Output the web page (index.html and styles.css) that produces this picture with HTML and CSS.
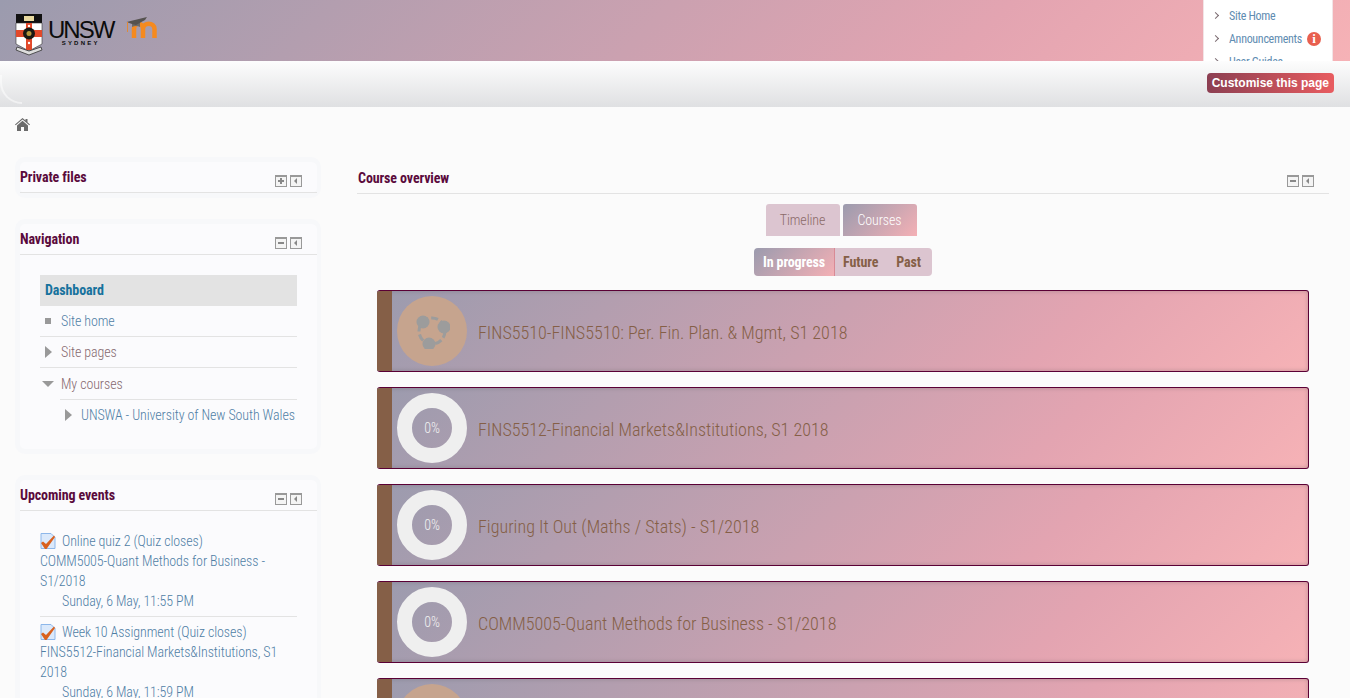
FILE: index.html
```html
<!DOCTYPE html>
<html lang="en">
<head>
    <meta charset="UTF-8">
    <title>Dashboard</title>
    <meta name="viewport" content="width=device-width, initial-scale=1.0">
    <link rel="stylesheet" href="styles.css">
</head>
<body>

<header class="topbar">
    <div class="brand">
        <svg class="crest" width="28" height="42" viewBox="0 0 28 42">
            <rect x="1" y="0" width="26" height="9" fill="#111"/>
            <rect x="9" y="2" width="10" height="5" fill="#e8d9a0"/>
            <path d="M1 9h26v21l-13 7-13-7z" fill="#fff" stroke="#333" stroke-width=".6"/>
            <rect x="11" y="9" width="6" height="27" fill="#e2492a"/>
            <rect x="1" y="16" width="26" height="7" fill="#e2492a"/>
            <circle cx="14" cy="19.500" r="6" fill="#1a1a14"/>
            <circle cx="14" cy="19.500" r="2.500" fill="#b5973d"/>
            <circle cx="14" cy="12" r="1.200" fill="#fff"/>
            <circle cx="14" cy="29" r="1.200" fill="#fff"/>
            <path d="M1 36l13 5 13-5-1-3-12 4-12-4z" fill="#ddd" stroke="#333" stroke-width=".8"/>
        </svg>
        <div class="wordmark">
            <span class="wordmark-main">UNSW</span>
            <span class="wordmark-sub">SYDNEY</span>
        </div>
        <svg class="moodle" width="32" height="24" viewBox="0 0 32 24">
            <path d="M8 23V14c0-7 9-7 9 0v9M17 14c0-7 11.500-7 11.500 0v9" fill="none" stroke="#f58a1f" stroke-width="4.500"/>
            <path d="M6 8v4c3-1.500 6-1 8 0V7z" fill="#6d6a67"/>
            <path d="M.500 7L21 2l-2 3-9 5-4-1z" fill="#55524f"/>
            <path d="M1.500 7v10" stroke="#e08a3a" stroke-width="1" fill="none"/>
        </svg>
    </div>
    <nav class="quick-menu">
        <a class="quick-link">Site Home</a>
        <a class="quick-link">Announcements <span class="info-badge">i</span></a>
        <a class="quick-link">User Guides</a>
    </nav>
</header>

<div class="band">
    <a class="customise">Customise this page</a>
</div>

<div class="crumbs">
    <svg width="15" height="13" viewBox="0 0 15 13"><path d="M7.500 0l3 2.600V1h2v3.300L15 6.500l-.7.800-6.800-5.800L.7 7.300 0 6.500zM2 7.500l5.500-4.700L13 7.500V13H9V9H6v4H2z" fill="#6b6b6b"/></svg>
</div>

<div class="page">
    <aside class="side">
        <section class="block">
            <div class="block-head">
                <h3>Private files</h3>
                <div class="block-tools">
                    <span class="tool tool-plus"></span>
                    <span class="tool tool-dock"></span>
                </div>
            </div>
        </section>

        <section class="block">
            <div class="block-head">
                <h3>Navigation</h3>
                <div class="block-tools">
                    <span class="tool tool-minus"></span>
                    <span class="tool tool-dock"></span>
                </div>
            </div>
            <ul class="nav-tree">
                <li class="nav-current">Dashboard</li>
                <li class="nav-link"><span class="mark mark-square"></span>Site home</li>
                <li class="nav-plain"><span class="mark mark-right"></span>Site pages</li>
                <li class="nav-plain nav-open"><span class="mark mark-down"></span>My courses</li>
                <li class="nav-link nav-child"><span class="mark mark-right"></span>UNSWA - University of New South Wales</li>
            </ul>
        </section>

        <section class="block">
            <div class="block-head">
                <h3>Upcoming events</h3>
                <div class="block-tools">
                    <span class="tool tool-minus"></span>
                    <span class="tool tool-dock"></span>
                </div>
            </div>
            <div class="events">
                <div class="event">
                    <div class="event-name">
                        <svg class="quiz-icon" width="16" height="16" viewBox="0 0 16 16"><path d="M1 .500h10l4 4v11H1z" fill="#dbe9fb" stroke="#8db7ea"/><path d="M1 10l2-1.500 3 2.500L14 2.500l1 1.500L6.500 16H5z" fill="#d9611f"/></svg>
                        Online quiz 2 (Quiz closes)
                    </div>
                    <div>COMM5005-Quant Methods for Business - S1/2018</div>
                    <div class="event-date">Sunday, 6 May, 11:55 PM</div>
                </div>
                <div class="event">
                    <div class="event-name">
                        <svg class="quiz-icon" width="16" height="16" viewBox="0 0 16 16"><path d="M1 .500h10l4 4v11H1z" fill="#dbe9fb" stroke="#8db7ea"/><path d="M1 10l2-1.500 3 2.500L14 2.500l1 1.500L6.500 16H5z" fill="#d9611f"/></svg>
                        Week 10 Assignment (Quiz closes)
                    </div>
                    <div>FINS5512-Financial Markets&amp;Institutions, S1 2018</div>
                    <div class="event-date">Sunday, 6 May, 11:59 PM</div>
                </div>
            </div>
        </section>
    </aside>

    <main class="main">
        <div class="block-head main-head">
            <h3>Course overview</h3>
            <div class="block-tools">
                <span class="tool tool-minus"></span>
                <span class="tool tool-dock"></span>
            </div>
        </div>

        <div class="tabs">
            <a class="tab">Timeline</a>
            <a class="tab tab-active">Courses</a>
        </div>

        <div class="pills">
            <a class="pill pill-active">In progress</a>
            <a class="pill">Future</a>
            <a class="pill">Past</a>
        </div>

        <div class="course">
            <div class="course-strip"></div>
            <div class="course-icon">
                <svg width="36" height="36" viewBox="0 0 36 36">
                    <circle cx="18" cy="18" r="13" fill="none" stroke="#9c9c9c" stroke-width="3" stroke-dasharray="7 3"/>
                    <circle cx="9" cy="9" r="6.500" fill="#9c9c9c"/>
                    <circle cx="30" cy="14" r="6.500" fill="#9c9c9c"/>
                    <circle cx="15" cy="31" r="6.500" fill="#9c9c9c"/>
                </svg>
            </div>
            <div class="course-name">FINS5510-FINS5510: Per. Fin. Plan. &amp; Mgmt, S1 2018</div>
        </div>
        <div class="course">
            <div class="course-strip"></div>
            <div class="course-ring">0%</div>
            <div class="course-name">FINS5512-Financial Markets&amp;Institutions, S1 2018</div>
        </div>
        <div class="course">
            <div class="course-strip"></div>
            <div class="course-ring">0%</div>
            <div class="course-name">Figuring It Out (Maths / Stats) - S1/2018</div>
        </div>
        <div class="course">
            <div class="course-strip"></div>
            <div class="course-ring">0%</div>
            <div class="course-name">COMM5005-Quant Methods for Business - S1/2018</div>
        </div>
        <div class="course">
            <div class="course-strip"></div>
            <div class="course-icon"></div>
            <div class="course-name"></div>
        </div>
    </main>
</div>

</body>
</html>
```

FILE: styles.css
```css
html, body {
    height: 100%;
    overflow: hidden;
}
body {
    margin: 0;
    background: #fbfbfb;
    font-family: "Roboto Condensed", "Open Sans Condensed", "Roboto", sans-serif;
    font-stretch: 75%;
    font-size: 14px;
    font-weight: 300;
    letter-spacing: -0.1px;
    color: #4f7ea5;
}
.topbar {
    height: 61px;
    display: flex;
    justify-content: space-between;
    overflow: hidden;
    background: linear-gradient(135deg, #9b9bae, #e3a4b1 72%, #f6b2b6);
}
.brand {
    display: flex;
    align-items: flex-start;
    padding: 14px 0 0 15px;
}
.wordmark {
    display: flex;
    flex-direction: column;
    align-items: center;
    margin-left: 5px;
    margin-top: 5px;
    color: #0c0c0c;
}
.wordmark-main {
    font-family: "Liberation Sans", sans-serif;
    font-stretch: normal;
    font-size: 24px;
    font-weight: normal;
    line-height: 21px;
    letter-spacing: -2px;
}
.wordmark-sub {
    font-family: "Liberation Sans", sans-serif;
    font-size: 6px;
    font-weight: bold;
    line-height: 7px;
    letter-spacing: 2.200px;
}
.moodle {
    margin-left: 13px;
    margin-top: 1px;
}
.quick-menu {
    width: 130px;
    margin-right: 17px;
    padding-top: 4px;
    box-sizing: border-box;
    background: #fff;
    border: 1px solid #f2e4e6;
    border-width: 0 1px;
    font-size: 12px;
    font-weight: 400;
    letter-spacing: -0.3px;
}
.quick-link {
    display: flex;
    align-items: center;
    height: 23px;
    padding-left: 25px;
    position: relative;
    color: #5f8db2;
}
.quick-link::before {
    content: "";
    position: absolute;
    left: 9px;
    top: 9px;
    width: 4px;
    height: 4px;
    border-top: 1px solid #7a6a70;
    border-right: 1px solid #7a6a70;
    transform: rotate(45deg);
}
.info-badge {
    width: 14px;
    height: 14px;
    flex-shrink: 0;
    margin-left: auto;
    margin-right: 11px;
    border-radius: 50%;
    background: #e8604f;
    color: #fff;
    font-family: "Liberation Serif", serif;
    font-weight: bold;
    font-size: 13px;
    line-height: 14px;
    text-align: center;
}
.band {
    height: 46px;
    position: relative;
    overflow: hidden;
    display: flex;
    justify-content: flex-end;
    align-items: flex-start;
    padding: 12px 16px 0 0;
    box-sizing: border-box;
    background: linear-gradient(#fdfdfd, #dfe0e2);
}
.band::before {
    content: "";
    position: absolute;
    left: 0;
    top: 14px;
    width: 20px;
    height: 27px;
    border-bottom-left-radius: 22px;
    border-left: 2px solid rgba(255,255,255,0.5);
    border-bottom: 2px solid rgba(255,255,255,0.5);
}
.customise {
    height: 20px;
    padding: 0 5px;
    border-radius: 4px;
    background: linear-gradient(90deg, #8c3f52, #e85c60);
    color: #fff;
    font-family: "Liberation Sans", sans-serif;
    font-weight: bold;
    font-size: 12px;
    letter-spacing: 0;
    line-height: 20px;
}
.crumbs {
    height: 50px;
    padding: 11px 0 0 15px;
    box-sizing: border-box;
}
.page {
    display: grid;
    grid-template-columns: 306px 1fr;
    column-gap: 36px;
    padding: 0 21px 0 15px;
}
.block {
    margin-bottom: 21px;
    border: 5px solid #f7f8fa;
    border-right-width: 4px;
    border-radius: 10px;
    background: #fbfbfd;
}
.block-head {
    display: flex;
    justify-content: space-between;
    height: 31px;
    box-sizing: border-box;
    border-bottom: 1px solid #e3e3e3;
}
.block-head h3 {
    margin: 0;
    padding-top: 7px;
    font-size: 14px;
    line-height: 16px;
    font-weight: bold;
    letter-spacing: -0.1px;
    color: #5a0a3c;
}
.block-tools {
    display: flex;
    gap: 3px;
    padding: 13px 15px 0 0;
}
.tool {
    width: 12px;
    height: 12px;
    box-sizing: border-box;
    border: 1px solid #999;
    border-top-width: 2px;
    background: #f4f4f4;
    position: relative;
}
.tool-minus::after,
.tool-plus::after {
    content: "";
    position: absolute;
    left: 2px;
    top: 3px;
    width: 6px;
    height: 2px;
    background: #888;
}
.tool-plus::before {
    content: "";
    position: absolute;
    left: 4px;
    top: 1px;
    width: 2px;
    height: 6px;
    background: #888;
}
.tool-dock::after {
    content: "";
    position: absolute;
    left: 0;
    top: 1px;
    border: 3px solid transparent;
    border-right-color: #888;
}
.nav-tree {
    list-style: none;
    margin: 20px 20px 19px 20px;
    padding: 0;
}
.nav-tree li {
    display: flex;
    align-items: center;
    height: 31px;
    box-sizing: border-box;
    border-bottom: 1px solid #e3e3e3;
    position: relative;
    padding-left: 21px;
    white-space: nowrap;
}
.nav-tree .nav-current {
    padding-left: 5px;
    background: #e3e3e3;
    color: #17729d;
    font-weight: bold;
}
.nav-tree .nav-plain {
    color: #86696f;
}
.nav-tree .nav-open {
    border-bottom: none;
}
.nav-tree .nav-child {
    margin-left: 20px;
    border-top: 1px solid #e3e3e3;
    border-bottom: none;
}
.mark {
    position: absolute;
    left: 5px;
}
.mark-square {
    width: 6px;
    height: 6px;
    background: #999;
}
.mark-right {
    border-left: 7px solid #999;
    border-top: 6px solid transparent;
    border-bottom: 6px solid transparent;
}
.mark-down {
    left: 2px;
    border-top: 6px solid #999;
    border-left: 6px solid transparent;
    border-right: 6px solid transparent;
}
.events {
    margin: 20px 20px 0 20px;
    line-height: 20px;
}
.event {
    padding-bottom: 5px;
    margin-bottom: 5px;
    border-bottom: 1px solid #e3e3e3;
}
.event:last-child {
    border-bottom: none;
}
.event-name {
    display: flex;
    align-items: center;
    gap: 6px;
}
.quiz-icon {
    flex-shrink: 0;
}
.event-date {
    padding-left: 22px;
}
.main-head {
    margin-top: 5px;
    height: 32px;
}
.main-head h3 {
    padding: 8px 0 0 1px;
}
.main-head .block-tools {
    padding: 13px 15px 0 0;
}
.tabs {
    display: flex;
    justify-content: center;
    gap: 3px;
    margin-top: 10px;
    padding-right: 4px;
}
.tab {
    width: 74px;
    height: 32px;
    border-radius: 3px 3px 0 0;
    background: #dcc5d0;
    color: #8b6a68;
    text-align: center;
    line-height: 32px;
}
.tab-active {
    background: linear-gradient(135deg, #9b9bae, #f4b0b5);
    color: #fff;
}
.pills {
    display: flex;
    justify-content: center;
    margin-top: 12px;
}
.pill {
    height: 28px;
    padding: 0 10px 0 8px;
    background: #dcc5d0;
    color: #855f47;
    font-weight: bold;
    line-height: 28px;
}
.pill:last-child {
    padding-right: 11px;
    border-radius: 0 4px 4px 0;
}
.pill-active {
    padding: 0 9px;
    border-radius: 4px 0 0 4px;
    border-right: 1px solid #d88a95;
    background: linear-gradient(135deg, #9b9bae, #f4b0b5);
    color: #fff;
}
.course {
    display: flex;
    align-items: center;
    height: 82px;
    margin: 14px 20px 15px 20px;
    box-sizing: border-box;
    border: 1px solid #5a0035;
    border-left: none;
    border-radius: 3px;
    background: linear-gradient(135deg, #9b9bae, #e3a4b1 72%, #f6b2b6);
    box-shadow: inset 0 0 4px rgba(90,90,90,0.35);
    overflow: hidden;
}
.course-strip {
    width: 15px;
    height: 82px;
    flex-shrink: 0;
    background: #855f47;
}
.course-icon {
    display: flex;
    align-items: center;
    justify-content: center;
    width: 70px;
    height: 70px;
    margin-left: 5px;
    flex-shrink: 0;
    border-radius: 50%;
    background: #c6a48e;
}
.course-ring {
    width: 70px;
    height: 70px;
    margin-left: 5px;
    flex-shrink: 0;
    box-sizing: border-box;
    border: 15px solid #efefef;
    border-radius: 50%;
    color: #f2f2f2;
    text-align: center;
    line-height: 41px;
}
.course-name {
    margin-left: 11px;
    padding-top: 2px;
    font-size: 18px;
    letter-spacing: 0.02px;
    color: #855f47;
}
.course + .course {
    margin-top: 0;
}
```
